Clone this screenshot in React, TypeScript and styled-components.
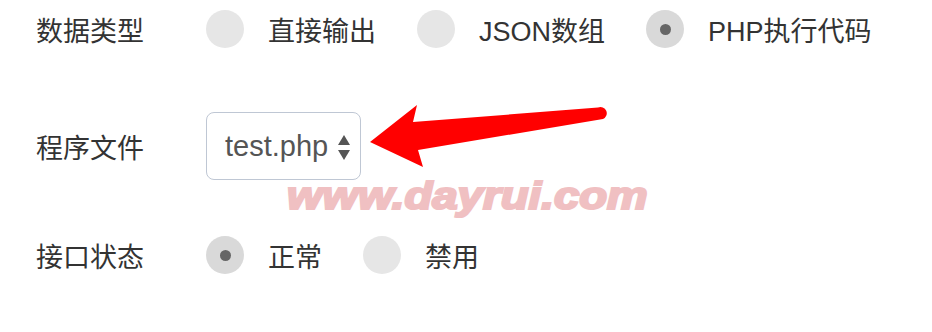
import styled, { createGlobalStyle } from 'styled-components';

const GlobalStyle = createGlobalStyle`
  body {
    margin: 0;
    background: #fff;
    font-family: 'Liberation Sans', 'Noto Sans CJK SC', sans-serif;
    color: #333;
  }
`;

const Page = styled.div`
  position: relative;
  width: 932px;
  height: 332px;
  padding-left: 36px;
  box-sizing: border-box;
  overflow: hidden;
`;

const Row = styled.div<{ $h: number; $mb?: number }>`
  display: flex;
  align-items: center;
  height: ${(p) => p.$h}px;
  margin-bottom: ${(p) => p.$mb ?? 0}px;
`;

const Label = styled.div`
  width: 170px;
  font-size: 27px;
  color: #333;
`;

const Option = styled.label`
  display: flex;
  align-items: center;
  gap: 24px;
  margin-right: 41px;
  font-size: 27px;
  color: #333;
`;

const Radio = styled.span<{ $on?: boolean }>`
  width: 38px;
  height: 38px;
  border-radius: 50%;
  background: ${(p) => (p.$on ? '#d9d9d9' : '#e6e6e6')};
  display: flex;
  align-items: center;
  justify-content: center;

  &::after {
    content: '';
    display: ${(p) => (p.$on ? 'block' : 'none')};
    width: 11px;
    height: 11px;
    border-radius: 50%;
    background: #666;
  }
`;

const Select = styled.div`
  width: 155px;
  height: 68px;
  box-sizing: border-box;
  border: 1.5px solid #bfc7d4;
  border-radius: 8px;
  display: flex;
  align-items: center;
  padding-left: 18px;
  gap: 10px;
  font-size: 29px;
  color: #555;
`;

const Carets = styled.svg`
  width: 12px;
  height: 25px;
  margin-top: 2px;
`;

const Watermark = styled.div`
  position: absolute;
  left: 287px;
  top: 177px;
  font-family: 'Liberation Sans', sans-serif;
  font-weight: 900;
  font-style: italic;
  font-size: 38px;
  line-height: 1;
  color: #f0c0c2;
  -webkit-text-stroke: 2.2px #f0c0c2;
  transform: scaleX(1.2);
  transform-origin: left top;
  pointer-events: none;
`;

const Overlay = styled.svg`
  position: absolute;
  left: 0;
  top: 0;
  pointer-events: none;
`;

export default function App() {
  return (
    <>
      <GlobalStyle />
      <Page>
        <Row $h={58} $mb={54}>
          <Label>数据类型</Label>
          <Option>
            <Radio />
            直接输出
          </Option>
          <Option>
            <Radio />
            JSON数组
          </Option>
          <Option>
            <Radio $on />
            PHP执行代码
          </Option>
        </Row>
        <Row $h={68} $mb={46}>
          <Label>程序文件</Label>
          <Select>
            test.php
            <Carets viewBox='0 0 12 25'>
              <path d='M6 0 L12 10 L0 10 Z' fill='#555' />
              <path d='M0 15 L12 15 L6 25 Z' fill='#555' />
            </Carets>
          </Select>
        </Row>
        <Row $h={58}>
          <Label>接口状态</Label>
          <Option>
            <Radio $on />
            正常
          </Option>
          <Option>
            <Radio />
            禁用
          </Option>
        </Row>
        <Watermark>www.dayrui.com</Watermark>
        <Overlay width='932' height='332' viewBox='0 0 932 332'>
          <path
            d='M370 142 L417 105 L413 122 L598 107.5 A5.8 5.8 0 0 1 603 119 L418 150 L423 167 Z'
            fill='#ff0000'
          />
        </Overlay>
      </Page>
    </>
  );
}
